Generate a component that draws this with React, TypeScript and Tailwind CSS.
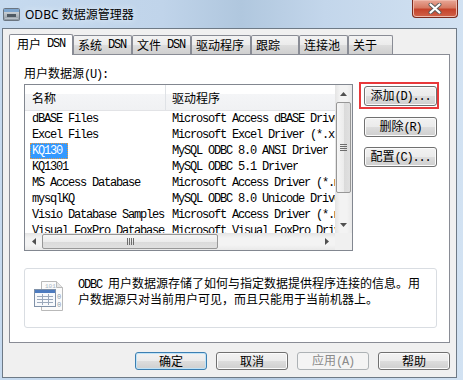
import type { ReactNode } from 'react'

const ROWS: [string, string][] = [
  ['dBASE Files', 'Microsoft Access dBASE Driver (*.dbf, *.ndx, *.mdx)'],
  ['Excel Files', 'Microsoft Excel Driver (*.xls, *.xlsx, *.xlsm, *.xlsb)'],
  ['KQ130', 'MySQL ODBC 8.0 ANSI Driver'],
  ['KQ1301', 'MySQL ODBC 5.1 Driver'],
  ['MS Access Database', 'Microsoft Access Driver (*.mdb, *.accdb)'],
  ['mysqlKQ', 'MySQL ODBC 8.0 Unicode Driver'],
  ['Visio Database Samples', 'Microsoft Access Driver (*.mdb, *.accdb)'],
  ['Visual FoxPro Database', 'Microsoft Visual FoxPro Driver'],
]

const TABS = [
  { label: '系统', dsn: true, w: 'w-[59px]' },
  { label: '文件', dsn: true, w: 'w-[59px]' },
  { label: '驱动程序', dsn: false, w: 'w-[60px]' },
  { label: '跟踪', dsn: false, w: 'w-[48px]' },
  { label: '连接池', dsn: false, w: 'w-[49px]' },
  { label: '关于', dsn: false, w: 'w-[45px]' },
]

// half-width latin, like SimSun in the dialog
function M({ children }: { children: ReactNode }) {
  return (
    <span className="font-['Liberation_Mono',monospace] text-[12px] tracking-[-1.2px]">
      {children}
    </span>
  )
}

function Btn({
  children,
  kind = 'normal',
  className = '',
}: {
  children: ReactNode
  kind?: 'normal' | 'default' | 'disabled'
  className?: string
}) {
  const look =
    kind === 'disabled'
      ? 'border-[#adb2b5] bg-[#f4f4f4] text-[#8a8a8a]'
      : kind === 'default'
        ? 'border-[#3c7fb1] bg-[linear-gradient(#f2f2f2_0%,#ebebeb_50%,#dddddd_51%,#cfcfcf_100%)] shadow-[inset_0_0_0_1px_#bfe3f8] text-black'
        : 'border-[#707070] bg-[linear-gradient(#f2f2f2_0%,#ebebeb_50%,#dddddd_51%,#cfcfcf_100%)] shadow-[inset_0_0_0_1px_#fbfbfb] text-black'
  return (
    <div
      className={`flex items-center justify-center rounded-[3px] border text-[12px] leading-none ${look} ${className}`}
    >
      <span>{children}</span>
    </div>
  )
}

function Arrow({ dir }: { dir: 'up' | 'down' | 'left' | 'right' }) {
  const pts = {
    up: '0,4 3.5,0 7,4',
    down: '0,0 3.5,4 7,0',
    left: '4,0 0,3.5 4,7',
    right: '0,0 4,3.5 0,7',
  }[dir]
  const horiz = dir === 'left' || dir === 'right'
  return (
    <svg width={horiz ? 4 : 7} height={horiz ? 7 : 4}>
      <polygon points={pts} fill="#505050" />
    </svg>
  )
}

function VScroll() {
  return (
    <div className="flex w-[17px] flex-col bg-[linear-gradient(to_right,#e4e4e4,#f3f3f3_30%,#f3f3f3_70%,#e9e9e9)]">
      <div className="flex h-[17px] items-center justify-center">
        <Arrow dir="up" />
      </div>
      <div className="mx-px flex h-[91px] items-center justify-center rounded-[2px] border border-[#979797] bg-[linear-gradient(to_right,#f6f6f6,#ececec_50%,#dadada_51%,#e0e0e0)]">
        <div className="flex flex-col gap-[1px]">
          <div className="h-px w-[7px] bg-[#6d6d6d]" />
          <div className="h-px w-[7px] bg-[#6d6d6d]" />
          <div className="h-px w-[7px] bg-[#6d6d6d]" />
          <div className="h-px w-[7px] bg-[#6d6d6d]" />
        </div>
      </div>
      <div className="flex-1" />
      <div className="flex h-[17px] items-center justify-center">
        <Arrow dir="down" />
      </div>
    </div>
  )
}

function HScroll() {
  return (
    <div className="flex flex-1 bg-[linear-gradient(#e4e4e4,#f3f3f3_30%,#f3f3f3_70%,#e9e9e9)]">
      <div className="flex w-[17px] items-center justify-center">
        <Arrow dir="left" />
      </div>
      <div className="my-px flex w-[176px] items-center justify-center rounded-[2px] border border-[#979797] bg-[linear-gradient(#f6f6f6,#ececec_50%,#dadada_51%,#e0e0e0)]">
        <div className="flex gap-[1px]">
          <div className="h-[7px] w-px bg-[#6d6d6d]" />
          <div className="h-[7px] w-px bg-[#6d6d6d]" />
          <div className="h-[7px] w-px bg-[#6d6d6d]" />
          <div className="h-[7px] w-px bg-[#6d6d6d]" />
        </div>
      </div>
      <div className="flex-1" />
      <div className="flex w-[17px] items-center justify-center">
        <Arrow dir="right" />
      </div>
    </div>
  )
}

function DsnIcon() {
  return (
    <svg width="32" height="32" viewBox="0 0 32 32">
      <path d="M7.5 1.5h15l6 6v23h-21z" fill="#fbfbfb" stroke="#b9b9b9" />
      <path d="M22.5 1.5v6h6" fill="#e6e6e6" stroke="#b9b9b9" />
      <text x="11" y="8" fontSize="6" fill="#aab4c2" fontFamily="Liberation Mono">101</text>
      <text x="23" y="19" fontSize="7" fill="#8b9bb0" fontFamily="Liberation Mono">0</text>
      <text x="23" y="27" fontSize="7" fill="#8b9bb0" fontFamily="Liberation Mono">0</text>
      <rect x="0.5" y="9.5" width="21" height="17" fill="#f7f9fc" stroke="#8091a8" />
      <rect x="1" y="10" width="20" height="3" fill="#4d7bbf" />
      <path
        d="M3 16.5h16M3 19.5h16M3 22.5h16M8.5 14v11M14.5 14v11"
        stroke="#9aa8bb"
        strokeWidth="1"
      />
    </svg>
  )
}

function TitleIcon() {
  return (
    <svg width="17" height="15" viewBox="0 0 17 15">
      <defs>
        <linearGradient id="ti" x1="0" y1="0" x2="0" y2="1">
          <stop offset="0" stopColor="#e4e8ec" />
          <stop offset="1" stopColor="#8a949e" />
        </linearGradient>
      </defs>
      <rect x="0.5" y="1.5" width="16" height="12" rx="1" fill="url(#ti)" stroke="#6b7580" />
      <rect x="1" y="2" width="15" height="3" fill="#7ea6cf" />
      <rect x="4" y="7" width="9" height="3" fill="#4f5963" />
      <rect x="2" y="11" width="13" height="1" fill="#b8c0c8" />
    </svg>
  )
}

export default function App() {
  return (
    <div className="flex h-[380px] w-[463px] flex-col overflow-hidden bg-[linear-gradient(to_right,#c6daef,#c0d4ea_35%,#b0c7de_52%,#c3d6eb_70%,#d2e2f2)] font-['Noto_Sans_CJK_SC','Noto_Sans',sans-serif] text-[12px] text-black">
      {/* title bar */}
      <div className="flex h-[28px] shrink-0">
        <div className="flex items-center pl-[3px] pt-[1px]">
          <TitleIcon />
          <span className="ml-[5px] font-['Noto_Sans','Noto_Sans_CJK_SC',sans-serif] text-[12px] [text-shadow:0_0_6px_#eef5fc]">
            ODBC 数据源管理器
          </span>
        </div>
        <div className="mr-[5px] ml-auto flex h-[18px] w-[46px] items-center justify-center rounded-b-[4px] border border-t-0 border-[#7b2b1e] bg-[linear-gradient(#e8a797,#d67a63_45%,#c5432b_55%,#d0634a)] shadow-[inset_0_0_0_1px_#efb9ab]">
          <svg width="14" height="11" viewBox="0 0 14 11">
            <path d="M2.5 1.5l9 8M11.5 1.5l-9 8" stroke="#5b5b5b" strokeWidth="4" strokeLinecap="round" />
            <path d="M2.5 1.5l9 8M11.5 1.5l-9 8" stroke="#ffffff" strokeWidth="2.2" strokeLinecap="round" />
          </svg>
        </div>
      </div>

      {/* client area */}
      <div className="mb-[2px] ml-[2px] mr-[6px] flex flex-1 flex-col border border-[#6e7a86] bg-[#f0f0f0] pl-[6px] pr-[6px] pt-[5px]">
        {/* tabs */}
        <div className="relative z-10 flex h-[21px] items-end">
          <div className="flex h-[21px] w-[64px] items-center rounded-t-[2px] border border-b-0 border-[#898c95] bg-white pl-[7px] pb-[2px]">
            用户<M>&nbsp;DSN</M>
          </div>
          {TABS.map((t) => (
            <div
              key={t.label}
              className={`mb-px flex h-[19px] items-center rounded-t-[2px] border border-b-0 border-[#898c95] bg-[linear-gradient(#f3f3f3,#ebebeb_50%,#dddddd_51%,#cfcfcf)] pl-[4px] ${t.w}`}
            >
              {t.label}
              {t.dsn && <M>&nbsp;DSN</M>}
            </div>
          ))}
        </div>

        {/* tab page */}
        <div className="-mt-px flex h-[289px] w-[441px] flex-col border border-[#898c95] bg-white pl-[14px] pt-[10px]">
          <div className="h-[15px] leading-[15px]">
            用户数据源<M>(U):</M>
          </div>

          <div className="mt-[4px] flex">
            {/* list view */}
            <div className="flex h-[167px] w-[329px] flex-col border border-[#828790] bg-white">
              <div className="flex h-[148px]">
                <div className="flex-1 overflow-hidden">
                  <div className="flex h-[26px] border-b border-[#e2e3e6] bg-[linear-gradient(#ffffff_0%,#ffffff_35%,#f4f5f7_36%,#f0f1f3_100%)]">
                    <div className="flex w-[141px] shrink-0 items-center border-r border-[#dfe2e6] pl-[7px] pt-[1px]">
                      名称
                    </div>
                    <div className="flex items-center pl-[6px] pt-[1px]">驱动程序</div>
                  </div>
                  {ROWS.map(([name, driver]) => (
                    <div
                      key={name}
                      className="flex h-[16px] items-center whitespace-nowrap font-['Liberation_Mono',monospace] text-[12px] tracking-[-1.2px]"
                    >
                      <div className="w-[141px] shrink-0 pl-[5px]">
                        {name === 'KQ130' ? (
                          <span className="inline-block h-[16px] bg-[#3399ff] pl-[2px] pr-[6px] leading-[16px] text-white outline outline-1 -outline-offset-1 outline-dotted outline-[#e09a4a]">
                            {name}
                          </span>
                        ) : (
                          <span className="pl-[2px]">{name}</span>
                        )}
                      </div>
                      <div className="overflow-hidden pl-[6px]">{driver}</div>
                    </div>
                  ))}
                </div>
                <VScroll />
              </div>
              <div className="flex h-[17px]">
                <HScroll />
                <div className="w-[17px] bg-[#f0f0f0]" />
              </div>
            </div>

            {/* side buttons */}
            <div className="-mt-[2px] ml-[6px] flex flex-col">
              <div className="h-[27px] w-[80px] border-2 border-[#e8383a] pl-[3px] pt-[2px]">
                <Btn className="h-[20px] w-[73px]">
                  添加<M>(D)...</M>
                </Btn>
              </div>
              <Btn className="ml-[5px] mt-[8px] h-[20px] w-[73px]">
                删除<M>(R)</M>
              </Btn>
              <Btn className="ml-[5px] mt-[10px] h-[20px] w-[73px]">
                配置<M>(C)...</M>
              </Btn>
            </div>
          </div>

          {/* info box */}
          <div className="mt-[17px] flex h-[60px] w-[413px] rounded-[3px] border border-[#d9dde2] pl-[9px] pt-[7px]">
            <div className="mt-[4px]">
              <DsnIcon />
            </div>
            <div className="ml-[12px] whitespace-nowrap leading-[14px]">
              <M>ODBC </M>用户数据源存储了如何与指定数据提供程序连接的信息。用
              <br />
              户数据源只对当前用户可见，而且只能用于当前机器上。
            </div>
          </div>
        </div>

        {/* dialog buttons */}
        <div className="mt-[9px] flex justify-end gap-[9px]">
          <Btn kind="default" className="h-[18px] w-[72px]">确定</Btn>
          <Btn className="h-[18px] w-[72px]">取消</Btn>
          <Btn kind="disabled" className="h-[18px] w-[72px]">
            应用<M>(A)</M>
          </Btn>
          <Btn className="h-[18px] w-[72px]">帮助</Btn>
        </div>
      </div>
    </div>
  )
}
